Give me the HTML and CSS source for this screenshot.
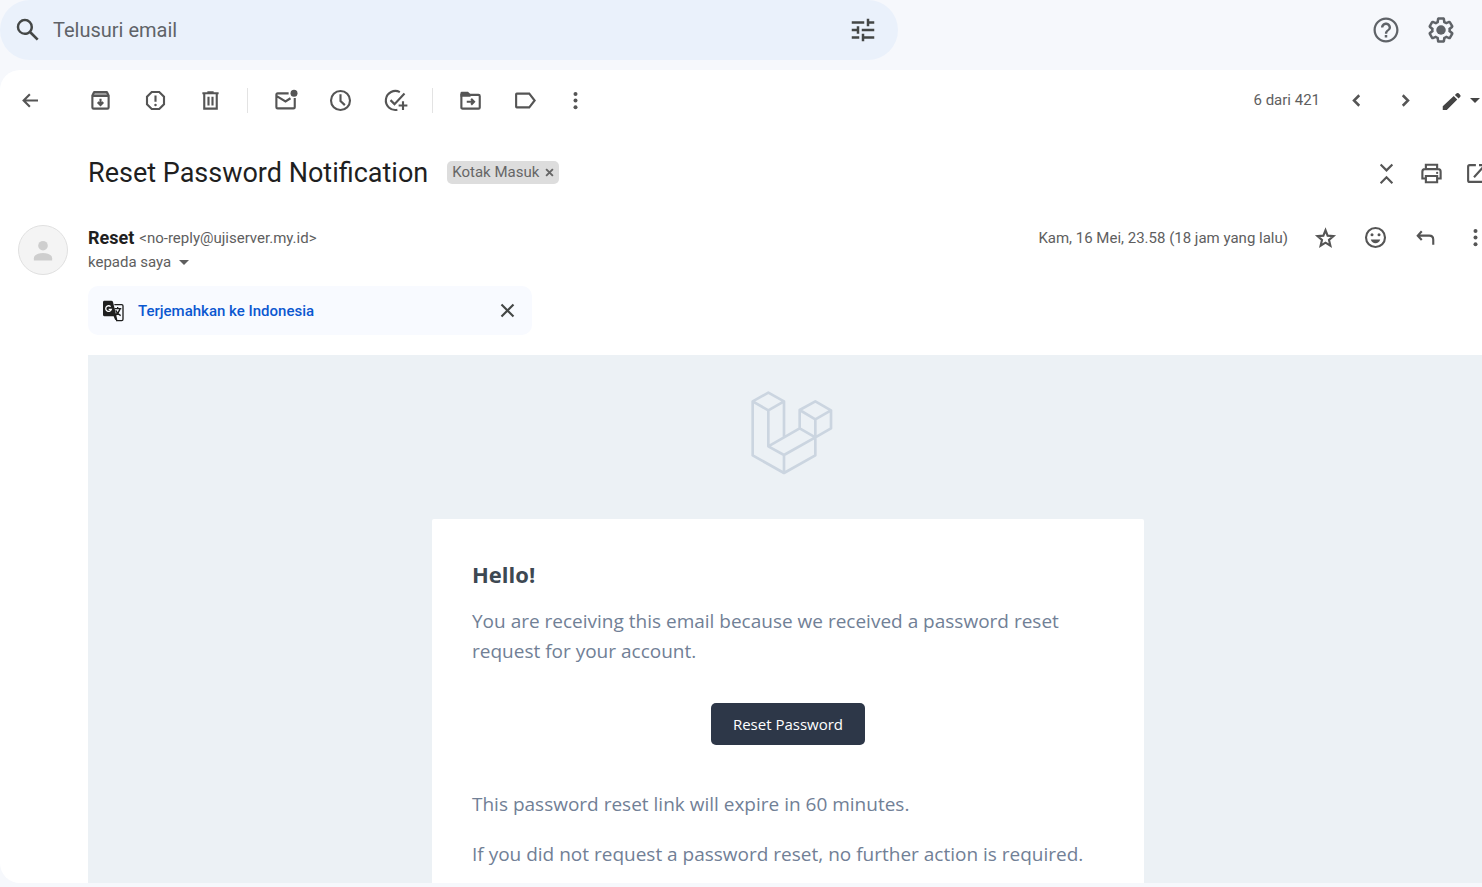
FILE: index.html
```html
<!DOCTYPE html>
<html lang="id">
<head>
<meta charset="utf-8">
<meta name="viewport" content="width=device-width, initial-scale=1">
<title>Reset Password Notification</title>
<link rel="stylesheet" href="styles.css">
</head>
<body>
<header class="topbar">
  <form class="search" role="search">
    <button class="icon-btn dark" type="button" aria-label="Telusuri"><svg class="icon-lg" viewBox="0 0 24 24"><path d="M20.49 19l-5.73-5.73C15.53 12.2 16 10.91 16 9.5A6.5 6.5 0 1 0 9.5 16c1.41 0 2.7-.47 3.77-1.24L19 20.49 20.49 19zM5 9.5C5 7.01 7.01 5 9.5 5S14 7.01 14 9.5 11.99 14 9.5 14 5 11.99 5 9.5z"/></svg></button>
    <input class="search-input" type="text" placeholder="Telusuri email" aria-label="Telusuri email">
    <button class="icon-btn dark" type="button" aria-label="Opsi penelusuran"><svg class="icon-lg" viewBox="0 0 24 24"><path d="M3 17v2h6v-2H3zM3 5v2h10V5H3zm10 16v-2h8v-2h-8v-2h-2v6h2zM7 9v2H3v2h4v2h2V9H7zm14 4v-2H11v2h10zm-6-4h2V7h4V5h-4V3h-2v6z"/></svg></button>
  </form>
  <div class="top-actions">
    <button class="icon-btn" type="button" aria-label="Bantuan"><svg class="icon-lg" viewBox="0 0 24 24"><path d="M11 18h2v-2h-2v2zm1-16C6.48 2 2 6.48 2 12s4.480 10 10 10 10-4.480 10-10S17.520 2 12 2zm0 18.200c-4.530 0-8.200-3.670-8.200-8.200S7.470 3.800 12 3.800s8.200 3.670 8.200 8.200-3.670 8.200-8.200 8.200zM12 6c-2.210 0-4 1.790-4 4h1.900c0-1.100 1-2.100 2.100-2.100s2.100 1 2.100 2.100c0 2-3 1.750-3 5h1.900c0-2.250 3-2.500 3-5 0-2.210-1.790-4-4-4z"/></svg></button>
    <button class="icon-btn" type="button" aria-label="Setelan"><svg class="icon-lg" viewBox="0 0 24 24"><path d="M13.850 22.250h-3.700c-.740 0-1.360-.540-1.450-1.270l-.270-1.890c-.270-.140-.530-.290-.790-.460l-1.800.720c-.700.260-1.470-.030-1.810-.650L2.200 15.530c-.350-.660-.200-1.440.360-1.880l1.530-1.190c-.010-.150-.020-.300-.020-.460 0-.150.010-.310.020-.460l-1.520-1.190c-.590-.450-.740-1.260-.370-1.880l1.850-3.190c.340-.620 1.110-.900 1.790-.630l1.810.730c.260-.170.520-.320.780-.460l.270-1.910c.090-.700.710-1.250 1.440-1.250h3.700c.740 0 1.360.540 1.450 1.270l.270 1.890c.270.140.530.290.790.460l1.800-.720c.710-.260 1.480.030 1.820.650l1.840 3.180c.360.660.200 1.440-.360 1.880l-1.520 1.190c.010.150.020.300.020.460s-.010.310-.020.460l1.520 1.190c.560.450.720 1.230.370 1.860l-1.860 3.220c-.340.620-1.110.900-1.800.630l-1.800-.720c-.260.170-.520.320-.780.460l-.270 1.910c-.100.680-.720 1.220-1.460 1.220zm-3.230-2h2.760l.370-2.550.530-.220c.440-.180.880-.440 1.340-.780l.450-.340 2.380.960 1.380-2.400-2.030-1.580.070-.560c.030-.260.060-.510.060-.780s-.030-.530-.060-.780l-.070-.560 2.030-1.580-1.390-2.400-2.390.960-.450-.350c-.420-.320-.870-.580-1.330-.770l-.520-.220-.370-2.550h-2.760l-.370 2.550-.530.210c-.440.190-.880.440-1.340.790l-.450.330-2.380-.950-1.390 2.390 2.030 1.580-.070.560a7 7 0 0 0-.060.790c0 .260.020.530.060.780l.070.560-2.030 1.580 1.380 2.400 2.390-.960.450.350c.430.330.860.580 1.330.770l.530.220z"/><circle cx="12" cy="12" r="3.800"/></svg></button>
  </div>
</header>

<main class="mail">
  <div class="toolbar">
    <div class="gutter"><button class="icon-btn" type="button" aria-label="Kembali"><svg class="icon" viewBox="0 0 20 20"><path class="line" d="M16 10H5M9.500 5L4.500 10l5 5"/></svg></button></div>
    <div class="group">
      <button class="icon-btn" type="button" aria-label="Arsipkan"><svg class="icon" viewBox="0 0 20 20"><path d="M3.500 3.500h13v3h-13z" opacity=".45"/><path class="line" d="M3.500 6L5 3.300h10L16.500 6v9.500q0 1-1 1h-11q-1 0-1-1zM3.500 6.300h13M10 8.500v5M7.800 11.300l2.200 2.200 2.200-2.200"/></svg></button>
      <button class="icon-btn" type="button" aria-label="Laporkan spam"><svg class="icon" viewBox="0 0 20 20"><path class="line" d="M7 3.200h6L16.800 7v6L13 16.800H7L3.200 13V7zM10 6v5"/><circle cx="10" cy="13.500" r="1"/></svg></button>
      <button class="icon-btn" type="button" aria-label="Hapus"><svg class="icon" viewBox="0 0 20 20"><path class="line" d="M3.500 4.200h13M7.500 3.500h5M5 4.500v12h10v-12M8.400 7v7M11.600 7v7"/></svg></button>
    </div>
    <span class="divider"></span>
    <div class="group">
      <button class="icon-btn" type="button" aria-label="Tandai belum dibaca"><svg class="icon" viewBox="0 0 20 20"><path class="line" d="M12.500 4.300H3.700q-1 0-1 1v10q0 1 1 1h12.700q1 0 1-1V8M3 6.500l7 4.300 4-2.600"/><circle cx="16.800" cy="4.200" r="2.800"/></svg></button>
      <button class="icon-btn" type="button" aria-label="Tunda"><svg class="icon" viewBox="0 0 20 20"><circle class="line" cx="10" cy="10" r="7.600"/><path class="line" d="M10 5v5.400l3.500 3.300"/></svg></button>
      <button class="icon-btn" type="button" aria-label="Tambahkan ke Tasks"><svg class="icon" viewBox="0 0 20 20"><path class="line" d="M13.500 3.300A7.600 7.600 0 1 0 11.500 17.400M6 9.700l3.200 3.200 8-8.500M16 10.500v7M12.500 14h7"/></svg></button>
    </div>
    <span class="divider"></span>
    <div class="group">
      <button class="icon-btn" type="button" aria-label="Pindahkan ke"><svg class="icon" viewBox="0 0 20 20"><path d="M2 4q0-1 1-1h5l2 2v2H2z"/><path class="line" d="M2.700 5.500h13.700q1 0 1 1v9q0 1-1 1H3.700q-1 0-1-1zM7 11h5.500M10.500 8.700l2.300 2.300-2.300 2.300"/></svg></button>
      <button class="icon-btn" type="button" aria-label="Label"><svg class="icon" viewBox="0 0 20 20"><path class="line" d="M3 4.500h10L17.300 10 13 15.500H3q-.500 0-.500-.500V5q0-.500.500-.500z"/></svg></button>
      <button class="icon-btn narrow" type="button" aria-label="Lainnya"><svg class="icon" viewBox="0 0 20 20"><circle cx="10" cy="4.700" r="1.600"/><circle cx="10" cy="10" r="1.600"/><circle cx="10" cy="15.300" r="1.600"/></svg></button>
    </div>
    <div class="pager">
      <span class="count">6 dari 421</span>
      <button class="icon-btn" type="button" aria-label="Lebih baru"><svg class="icon" viewBox="0 0 20 20"><path class="line bold" d="M12.200 5.800L8 10l4.200 4.200"/></svg></button>
      <button class="icon-btn" type="button" aria-label="Lebih lama"><svg class="icon" viewBox="0 0 20 20"><path class="line bold" d="M7.800 5.800L12 10l-4.200 4.200"/></svg></button>
      <button class="pen" type="button" aria-label="Alat input"><svg class="icon" viewBox="0 0 20 20"><path d="M3 17.500v-3L11.800 6.300l2.800 2.800L6.200 17.500zM12.700 5.500l1.500-1.300q.800-.600 1.500 0L17 5.500q.600.800 0 1.500l-1.300 1.300z"/></svg><svg class="caret" viewBox="0 0 10 5"><path d="M0 0h10L5 5z"/></svg></button>
    </div>
  </div>

  <div class="subject-row">
    <h1 class="subject">Reset Password Notification</h1>
    <span class="chip">Kotak Masuk <button class="chip-x" type="button" aria-label="Hapus label Kotak Masuk"><svg viewBox="0 0 8 8"><path class="line" d="M1 1l6 6M7 1L1 7"/></svg></button></span>
    <div class="subject-actions">
      <button class="icon-btn" type="button" aria-label="Ciutkan semua"><svg class="icon" viewBox="0 0 20 20"><path class="line" d="M5.300 2.800L10 7.500l4.700-4.700M5.300 17.800L10 13l4.700 4.800"/></svg></button>
      <button class="icon-btn" type="button" aria-label="Cetak semua"><svg class="icon" viewBox="0 0 20 20"><path class="line" d="M5.500 6.500V3h9v3.500M5.500 14H2.700V8.500q0-2 2-2h10.600q2 0 2 2V14h-2.800M5.500 12h9v5h-9z"/><circle cx="14.500" cy="9.500" r=".9"/></svg></button>
      <button class="icon-btn" type="button" aria-label="Di jendela baru"><svg class="icon" viewBox="0 0 20 20"><path class="line" d="M9.500 3.300h-5q-1.200 0-1.200 1.200v11q0 1.200 1.200 1.200h11q1.200 0 1.200-1.200v-5M12 3.300h4.700V8M16.500 3.500L8 13"/></svg></button>
    </div>
  </div>

  <section class="message">
    <div class="avatar"><svg viewBox="0 0 50 50"><circle cx="25" cy="20.500" r="5"/><path d="M15.500 36v-2.500c0-3.500 5-5.500 9.500-5.500s9.500 2 9.500 5.500V36z"/></svg></div>
    <div class="message-main">
      <div class="sender-row">
        <div class="sender">
          <div class="from"><b class="name">Reset</b> <span>&lt;no-reply@ujiserver.my.id&gt;</span></div>
          <button class="to" type="button">kepada saya <svg class="caret" viewBox="0 0 10 5"><path d="M0 0h10L5 5z"/></svg></button>
        </div>
        <div class="meta">
          <time class="date">Kam, 16 Mei, 23.58 (18 jam yang lalu)</time>
          <button class="icon-btn" type="button" aria-label="Beri bintang"><svg class="icon" viewBox="0 0 20 20"><path class="line" d="M10 4.200l1.700 4.300 4.700.400-3.600 3.100 1.100 4.500L10 14.100l-3.900 2.400L7.200 12 3.600 8.900l4.700-.400z"/></svg></button>
          <button class="icon-btn" type="button" aria-label="Tambahkan reaksi"><svg class="icon" viewBox="0 0 20 20"><circle class="line" cx="10" cy="10" r="7.600"/><circle cx="7.200" cy="7.800" r="1.200"/><circle cx="12.800" cy="7.800" r="1.200"/><path d="M6.200 11.500h7.600q-1.100 3-3.800 3t-3.800-3z"/></svg></button>
          <button class="icon-btn" type="button" aria-label="Balas"><svg class="icon" viewBox="0 0 20 20"><path class="line" d="M7 5L3.800 8.500 7 12M3.800 8.500H13q3.200 0 3.200 3.200v4"/></svg></button>
          <button class="icon-btn" type="button" aria-label="Lainnya"><svg class="icon" viewBox="0 0 20 20"><circle cx="10" cy="4.700" r="1.600"/><circle cx="10" cy="10" r="1.600"/><circle cx="10" cy="15.300" r="1.600"/></svg></button>
        </div>
      </div>

      <div class="translate">
        <svg class="translate-icon" viewBox="0 0 66 66"><path d="M6 2h22q4 0 5 4l13 53q-6 5-9-5L35 49H8q-5 0-5-5V7q0-5 3-5z" fill="#1f1f1f"/><path d="M37 14h22q4 0 4 4v40q0 4-4 4H42" fill="none" stroke="#1f1f1f" stroke-width="4"/><path d="M26 20a8.500 8.500 0 1 0 2 8h-8" fill="none" stroke="#fff" stroke-width="4"/><path d="M37 26h21M47 21v5M54 27q-4 13-16 20M41 31q5 10 15 16" fill="none" stroke="#1f1f1f" stroke-width="4"/></svg>
        <a class="translate-link" href="#">Terjemahkan ke Indonesia</a>
        <button class="icon-btn dark" type="button" aria-label="Tutup"><svg class="icon" viewBox="0 0 20 20"><path class="line" d="M5.200 5.200l9.600 9.600M14.800 5.200l-9.600 9.600"/></svg></button>
      </div>

      <div class="email">
        <svg class="logo" viewBox="63 48 282 282" role="img" aria-label="Laravel Logo"><path d="M192 202V94L145 68 98 94V256L192 309 286 256V202L192 255 145 229V121L98 94M145 121L192 94M145 229L239 175 286 202V148L239 120V175M239 120L286 94 333 121 286 148M333 121V175L286 202M192 255V309"/></svg>
        <article class="card">
          <h2 class="hello">Hello!</h2>
          <p class="para">You are receiving this email because we received a password reset request for your account.</p>
          <div class="action"><a class="cta" href="#">Reset Password</a></div>
          <p class="para">This password reset link will expire in 60 minutes.</p>
          <p class="para">If you did not request a password reset, no further action is required.</p>
        </article>
      </div>
    </div>
  </section>
</main>
</body>
</html>
```
FILE: styles.css
```css
* { box-sizing: border-box; }

body {
  margin: 0;
  height: 100vh;
  display: flex;
  flex-direction: column;
  gap: 10px;
  padding-bottom: 4px;
  overflow: hidden;
  background: #f6f8fc;
  color: #5e5e5e;
  font-family: Roboto, "Liberation Sans", sans-serif;
  font-size: 15px;
}

h1, h2, p { margin: 0; }

button {
  padding: 0;
  border: 0;
  background: none;
  color: inherit;
  font: inherit;
  cursor: pointer;
}

svg { display: block; fill: currentColor; }
.line { fill: none; stroke: currentColor; stroke-width: 1.7; }
.bold { stroke-width: 2; }

.icon { width: 25px; height: 25px; }
.icon-lg { width: 30px; height: 30px; }
.icon-btn { flex: none; color: #555; }
.dark { color: #444746; }
.caret { width: 10px; height: 5px; }

/* Top bar */
.topbar {
  flex: none;
  display: flex;
  justify-content: space-between;
  height: 60px;
}
.search {
  flex: 0 1 898px;
  display: flex;
  align-items: center;
  gap: 10px;
  padding: 0 20px 0 13px;
  border-radius: 30px;
  background: #eaf1fb;
}
.search-input {
  flex: 1;
  min-width: 0;
  padding: 0;
  border: 0;
  outline: 0;
  background: none;
  color: #1f1f1f;
  font: 20px Roboto, "Liberation Sans", sans-serif;
}
.search-input::placeholder { color: #5f6368; opacity: 1; }
.top-actions {
  display: flex;
  align-items: center;
  gap: 25px;
  padding-right: 26px;
}
.top-actions .icon-btn { color: #5f6368; }

/* Mail pane */
.mail {
  flex: 1;
  min-height: 0;
  overflow: hidden;
  border-radius: 20px 0 0 20px;
  background: #fff;
}
.toolbar {
  display: flex;
  align-items: center;
  height: 60px;
  padding-left: 18px;
}
.gutter { flex: none; display: flex; width: 70px; }
.group { display: flex; gap: 30px; }
.narrow { margin-left: -5px; }
.divider {
  width: 1px;
  height: 25px;
  margin: 0 25px 0 24px;
  background: #e3e3e3;
}
.pager {
  flex: 1;
  display: flex;
  align-items: center;
  justify-content: flex-end;
  gap: 24px;
  padding-right: 2px;
}
.pen {
  display: flex;
  align-items: center;
  gap: 6px;
  margin-left: -3px;
  color: #444;
}

/* Subject */
.subject-row {
  display: flex;
  align-items: center;
  min-height: 95px;
  padding: 25px 0 34px 88px;
}
.subject {
  color: #1f1f1f;
  font-size: 27px;
  font-weight: 400;
  line-height: 36px;
}
.chip {
  display: flex;
  align-items: center;
  gap: 6px;
  height: 23px;
  margin: 0 0 2px 19px;
  padding: 0 5px;
  border-radius: 5px;
  background: #ddd;
  color: #666;
}
.chip-x svg { width: 9px; height: 9px; }
.subject-actions {
  display: flex;
  gap: 20px;
  margin: 0 -7px 0 auto;
}

/* Message */
.message { display: flex; gap: 20px; padding-left: 18px; }
.avatar {
  flex: none;
  width: 50px;
  height: 50px;
  overflow: hidden;
  border: 1px solid #e0e0e0;
  border-radius: 50%;
  background: #f4f4f4;
  color: #cecece;
}
.message-main { flex: 1; min-width: 0; margin-right: -6px; }
.sender-row { display: flex; justify-content: space-between; }
.from {
  display: flex;
  align-items: center;
  gap: 5px;
  height: 25px;
}
.name { color: #1f1f1f; font-size: 18px; font-weight: 700; }
.to {
  display: flex;
  align-items: center;
  gap: 8px;
  line-height: 25px;
}
.meta { display: flex; gap: 25px; height: 25px; align-items: center; }

.translate {
  display: flex;
  align-items: center;
  width: 444px;
  max-width: 100%;
  height: 49px;
  margin-top: 11px;
  padding: 0 12px 0 14px;
  border-radius: 10px;
  background: #f8faff;
}
.translate-icon { width: 22px; height: 22px; margin-right: 14px; }
.translate-link {
  flex: 1;
  color: #0b57d0;
  font-weight: 500;
  text-decoration: none;
}

/* Email content */
.email {
  min-height: 600px;
  margin-top: 20px;
  padding-top: 31px;
  background: #ecf1f5;
  font-family: "Open Sans", "Noto Sans", sans-serif;
}
.logo {
  width: 94px;
  height: 94px;
  margin: 0 auto 39px;
  fill: none;
  stroke: #cbd5e0;
  stroke-width: 8;
  stroke-linejoin: round;
}
.card {
  max-width: 712px;
  margin: 0 auto;
  padding: 40px;
  border-radius: 2px;
  background: #fff;
}
.hello {
  margin-bottom: 17px;
  color: #3d4852;
  font-size: 22px;
  font-weight: 700;
  line-height: 30px;
}
.para {
  margin-bottom: 20px;
  color: #718096;
  font-size: 19px;
  line-height: 30px;
}
.action { display: flex; justify-content: center; margin: 37px 0 44px; }
.cta {
  padding: 0 22px;
  border-radius: 5px;
  background: #2d3748;
  color: #fff;
  font-size: 15px;
  line-height: 42px;
  text-decoration: none;
}
```
